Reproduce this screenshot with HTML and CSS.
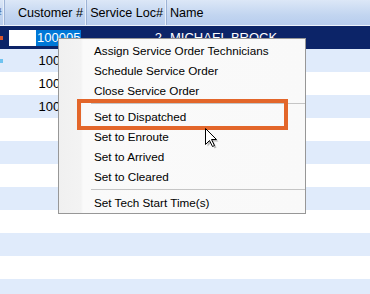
FILE: index.html
```html
<!DOCTYPE html>
<html lang="en">

<head>
    <meta charset="UTF-8">
    <title>Service Orders</title>
    <link rel="stylesheet" href="styles.css">
</head>

<body>
    <div class="grid">
        <div class="row header">
            <div class="cell c0"><span class="clip">#</span></div>
            <div class="cell c1">Customer #</div>
            <div class="cell c2">Service Loc#</div>
            <div class="cell c3 left">Name</div>
        </div>

        <div class="row selected">
            <div class="cell c0"><span class="mark red"></span></div>
            <div class="cell c1 edit"><span class="box"></span><span class="hl">100005</span></div>
            <div class="cell c2">2</div>
            <div class="cell c3 left">MICHAEL BROCK</div>
        </div>
        <div class="row alt">
            <div class="cell c0"><span class="mark blue"></span></div>
            <div class="cell c1">100006</div>
            <div class="cell c2"></div>
            <div class="cell c3 left"></div>
        </div>
        <div class="row">
            <div class="cell c0"></div>
            <div class="cell c1">100007</div>
            <div class="cell c2"></div>
            <div class="cell c3 left"></div>
        </div>
        <div class="row alt">
            <div class="cell c0"></div>
            <div class="cell c1">100008</div>
            <div class="cell c2"></div>
            <div class="cell c3 left"></div>
        </div>
        <div class="row"></div>
        <div class="row alt"></div>
        <div class="row"></div>
        <div class="row alt"></div>
        <div class="row"></div>
        <div class="row alt"></div>
        <div class="row"></div>
        <div class="row alt"></div>
    </div>

    <div class="menu">
        <div class="item">Assign Service Order Technicians</div>
        <div class="item">Schedule Service Order</div>
        <div class="item">Close Service Order</div>
        <div class="sep"></div>
        <div class="item">Set to Dispatched</div>
        <div class="item">Set to Enroute</div>
        <div class="item">Set to Arrived</div>
        <div class="item">Set to Cleared</div>
        <div class="sep"></div>
        <div class="item">Set Tech Start Time(s)</div>
    </div>

    <div class="callout"></div>

    <svg class="cursor" width="16" height="22" viewBox="0 0 16 22">
        <path d="M2.5,2.5 L2.5,18.5 L6.5,14.5 L9.5,20.5 L11.5,19.5 L8.5,13.5 L13.5,13.5 Z" fill="rgba(0,0,0,0.25)" />
        <path d="M0.5,0.5 L0.5,16.5 L4.5,12.5 L7.5,18.5 L9.5,17.5 L6.5,11.5 L11.5,11.5 Z" fill="#fff" stroke="#000" stroke-width="1" stroke-linejoin="miter" />
    </svg>
</body>

</html>
```

FILE: styles.css
```css
body {
    margin: 0;
    width: 370px;
    height: 294px;
    overflow: hidden;
    position: relative;
    background-color: #fff;
    font-family: "Liberation Sans", Arial, sans-serif;
}

.grid {
    width: 370px;
}

.row {
    display: flex;
    height: 23px;
    font-size: 13px;
    color: #000;
}

.row.alt {
    background-color: #e0ebfb;
}

.header {
    height: 25px;
    font-size: 12.6px;
    border-bottom: 1px solid #eef3fb;
    background: linear-gradient(#dce7f7, #c2d5f0 60%, #b8cdee);
}

.cell {
    display: flex;
    align-items: center;
    justify-content: flex-end;
    padding-right: 5px;
    box-sizing: border-box;
    overflow: hidden;
    white-space: nowrap;
}

.cell.left {
    justify-content: flex-start;
    padding-left: 3px;
}

.header .cell {
    border-right: 1px solid #9db3d6;
    box-shadow: inset -1px 0 0 #e8eff9;
    padding-right: 3px;
}

.c0 {
    width: 5px;
    padding: 0;
    justify-content: flex-start;
}

.c1 {
    width: 82px;
}

.c2 {
    width: 80px;
}

.c3 {
    flex: 1;
}

.header .c3 {
    border-right: none;
    box-shadow: none;
}

.clip {
    margin-left: -5px;
    color: #3c5a8a;
    font-size: 12px;
}

.mark {
    display: block;
    width: 3px;
    height: 4px;
}

.mark.red {
    background-color: #d8552c;
}

.mark.blue {
    background-color: #6fc3f0;
}

.selected {
    background-color: #0c2468;
    color: #fff;
}

.edit {
    justify-content: flex-start;
    padding: 0 0 0 4px;
}

.box {
    display: inline-block;
    width: 27px;
    height: 16px;
    background-color: #fff;
}

.hl {
    display: inline-block;
    height: 16px;
    line-height: 16px;
    padding: 0 1px 0 1px;
    background-color: #0078d7;
    color: #fff;
}

.menu {
    position: absolute;
    left: 58px;
    top: 38px;
    width: 248px;
    box-sizing: border-box;
    border: 1px solid #979797;
    padding: 2px 0 0 0;
    background: linear-gradient(90deg, #f0f0f0 0, #f3f3f3 22px, #fafafa 24px, #f9f9f9 100%);
    font-size: 11.7px;
    color: #000;
}

.item {
    height: 20px;
    line-height: 20px;
    padding-left: 35px;
    white-space: nowrap;
}

.sep {
    height: 6px;
    margin-left: 32px;
    box-sizing: border-box;
    border-top: 2px solid transparent;
    position: relative;
}

.sep::after {
    content: "";
    position: absolute;
    left: 0;
    right: 0;
    top: 0;
    height: 1px;
    background-color: #c5c5c5;
}

.callout {
    position: absolute;
    left: 77px;
    top: 99px;
    width: 211px;
    height: 31px;
    box-sizing: border-box;
    border: 4px solid #e3662a;
}

.cursor {
    position: absolute;
    left: 205px;
    top: 128px;
}
```
